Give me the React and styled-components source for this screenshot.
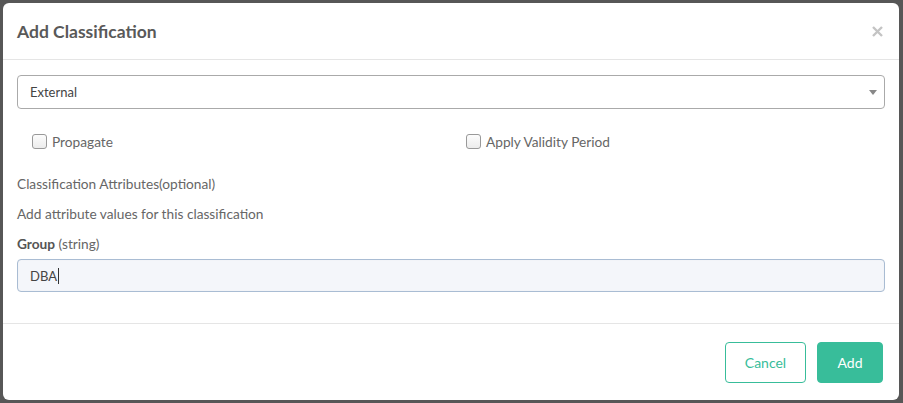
import React from "react";
import styled, { createGlobalStyle } from "styled-components";

const GlobalStyle = createGlobalStyle`
  html, body {
    margin: 0;
    padding: 0;
    background: #575757;
    font-family: "Lato", "Liberation Sans", sans-serif;
  }
  * {
    box-sizing: border-box;
  }
`;

const Backdrop = styled.div`
  width: 903px;
  height: 403px;
  padding: 3px 4px 3px 3px;
`;

const Modal = styled.div`
  width: 896px;
  height: 397px;
  background: #fff;
  border-radius: 6px;
  display: flex;
  flex-direction: column;
`;

const Header = styled.div`
  height: 57px;
  border-bottom: 1px solid #e5e5e5;
  padding: 0 14px;
  display: flex;
  align-items: center;
  justify-content: space-between;
`;

const Title = styled.h4`
  margin: 0;
  font-size: 17.5px;
  font-weight: 700;
  color: #595959;
`;

const Close = styled.button`
  border: none;
  background: none;
  padding: 0;
  width: 16px;
  height: 16px;
  display: flex;
  align-items: center;
  justify-content: center;
  cursor: pointer;
`;

const Body = styled.div`
  flex: 1;
  padding: 15px 14px 0;
  border-bottom: 1px solid #e5e5e5;
`;

const SelectBox = styled.div`
  height: 34px;
  border: 1px solid #aaa;
  border-radius: 4px;
  padding: 0 12px;
  display: flex;
  align-items: center;
  justify-content: space-between;
  font-size: 13px;
  color: #444;
`;

const Caret = styled.span`
  width: 0;
  height: 0;
  border-left: 4px solid transparent;
  border-right: 4px solid transparent;
  border-top: 5px solid #888;
  margin-right: -5px;
`;

const CheckRow = styled.div`
  display: grid;
  grid-template-columns: 1fr 1fr;
  margin-top: 24px;
`;

const CheckLabel = styled.label`
  display: flex;
  align-items: center;
  gap: 5px;
  padding-left: 15px;
  font-size: 13.7px;
  color: #666;
`;

const Box = styled.span`
  width: 15px;
  height: 15px;
  border: 1px solid #999;
  border-radius: 3px;
  background: linear-gradient(#fcfcfc, #ececec);
`;

const Text = styled.p`
  margin: ${(p) => p.$top}px 0 0;
  font-size: 13.7px;
  color: #666;
  line-height: 18px;
`;

const FieldLabel = styled.div`
  margin-top: 12px;
  font-size: 13.7px;
  color: #666;
  line-height: 18px;

  b {
    color: #555;
  }
`;

const Input = styled.div`
  margin-top: 6px;
  height: 33px;
  border: 1px solid #a9bcd3;
  border-radius: 4px;
  background: #f4f6fa;
  box-shadow: inset 0 0 1px rgba(0, 0, 0, 0.1);
  padding: 0 12px;
  display: flex;
  align-items: center;
  font-size: 13px;
  color: #444;
`;

const Cursor = styled.span`
  display: inline-block;
  width: 1px;
  height: 16px;
  background: #333;
  margin-left: 1px;
`;

const Footer = styled.div`
  height: 76px;
  padding: 18px 16px 0;
  display: flex;
  justify-content: flex-end;
  gap: 11px;
`;

const Button = styled.button`
  height: 41px;
  width: ${(p) => p.$width}px;
  padding: 0;
  border-radius: 4px;
  border: 1px solid #38bd9a;
  background: ${(p) => (p.$primary ? "#38bd9a" : "#fff")};
  color: ${(p) => (p.$primary ? "#fff" : "#38bd9a")};
  font-family: "Lato", "Liberation Sans", sans-serif;
  font-size: 14px;
  cursor: pointer;
`;

export default function App() {
  return (
    <>
      <GlobalStyle />
      <Backdrop>
        <Modal>
          <Header>
            <Title>Add Classification</Title>
            <Close aria-label="close">
              <svg width="11" height="11" viewBox="0 0 11 11">
                <path
                  d="M1 1L10 10M10 1L1 10"
                  stroke="#c4c4c4"
                  strokeWidth="2.4"
                  strokeLinecap="butt"
                />
              </svg>
            </Close>
          </Header>
          <Body>
            <SelectBox>
              External
              <Caret />
            </SelectBox>
            <CheckRow>
              <CheckLabel>
                <Box />
                Propagate
              </CheckLabel>
              <CheckLabel>
                <Box />
                Apply Validity Period
              </CheckLabel>
            </CheckRow>
            <Text $top={25}>Classification Attributes(optional)</Text>
            <Text $top={12}>Add attribute values for this classification</Text>
            <FieldLabel>
              <b>Group</b> (string)
            </FieldLabel>
            <Input>
              DBA
              <Cursor />
            </Input>
          </Body>
          <Footer>
            <Button $width={81}>Cancel</Button>
            <Button $primary $width={66}>
              Add
            </Button>
          </Footer>
        </Modal>
      </Backdrop>
    </>
  );
}
